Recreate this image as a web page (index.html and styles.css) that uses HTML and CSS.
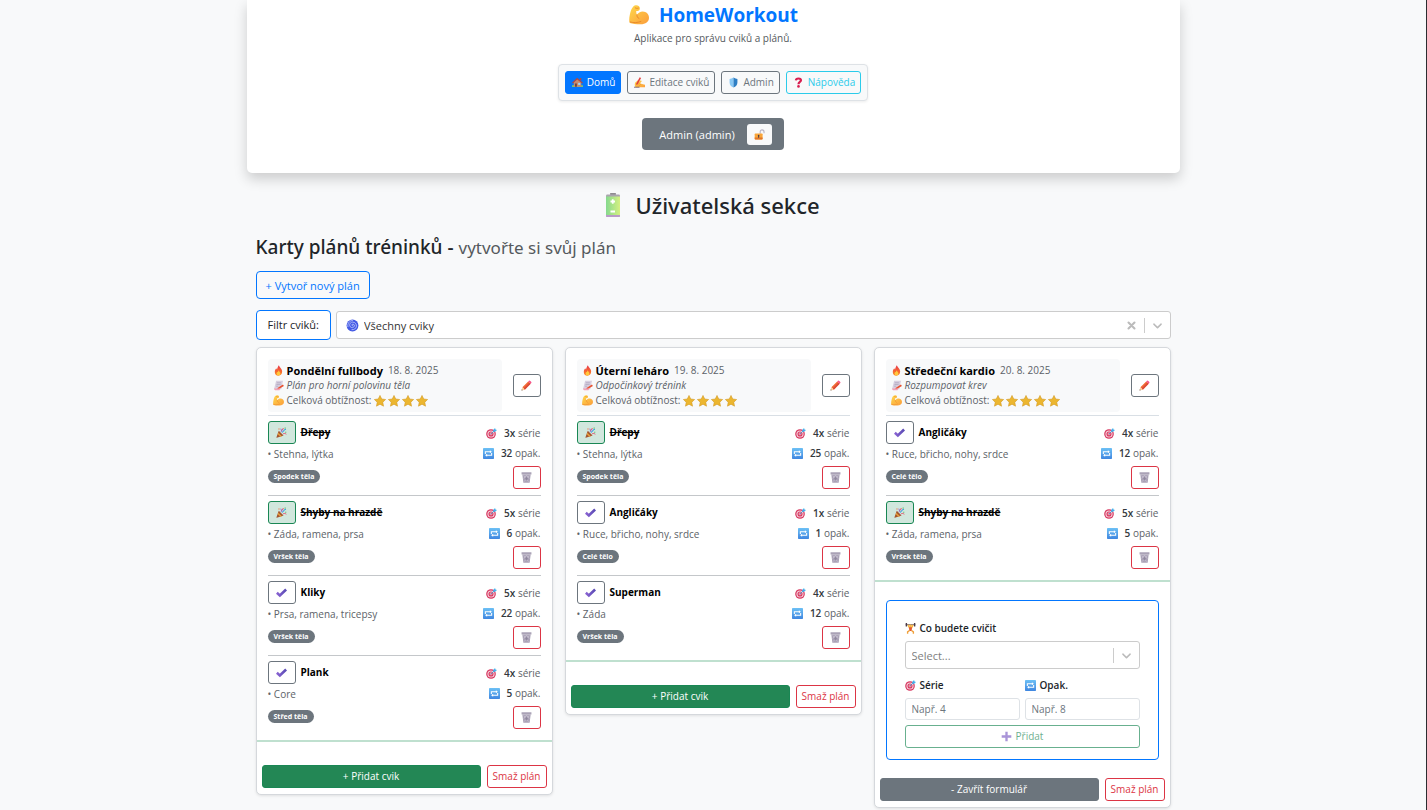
FILE: index.html
```html
<!DOCTYPE html>
<html lang="cs">
<head>
<meta charset="utf-8">
<meta name="viewport" content="width=device-width, initial-scale=1">
<title>HomeWorkout</title>
<link rel="stylesheet" href="styles.css">
</head>
<body>
<svg class="sprite" aria-hidden="true">
  <defs>
    <linearGradient id="g-skin" x1="0" y1="0" x2="1" y2="1"><stop offset="0" stop-color="#ffd84a"/><stop offset="1" stop-color="#fb9d3c"/></linearGradient>
    <linearGradient id="g-fire" x1="0" y1="0" x2="0" y2="1"><stop offset="0" stop-color="#e8364c"/><stop offset="1" stop-color="#ff8a1f"/></linearGradient>
    <linearGradient id="g-battery" x1="0" y1="0" x2="1" y2="0"><stop offset="0" stop-color="#86d98e"/><stop offset="1" stop-color="#d5f082"/></linearGradient>
    <linearGradient id="g-check" x1="0" y1="0" x2="1" y2="0"><stop offset="0" stop-color="#8a63d2"/><stop offset="1" stop-color="#5a4bb5"/></linearGradient>
    <linearGradient id="g-repeat" x1="0" y1="0" x2="0" y2="1"><stop offset="0" stop-color="#6cc0f5"/><stop offset="1" stop-color="#3f86e0"/></linearGradient>
  </defs>
  <symbol id="i-muscle" viewBox="0 0 16 16"><path fill="url(#g-skin)" d="M3.300 1.300C4.300.3 6.500-.1 7.700.8c1 .7 1.300 2.200.6 3.200-.5.700-1.500.9-2.500.8-.1 1.200.1 2.200.6 3 .9-1.600 2.600-2.600 4.600-2.600 2.800 0 5 2.200 5 5 0 3.200-2.700 5.200-6.800 5.200-3.500 0-6.500-.2-8.500-1C0 13.800 0 10.500.7 7.500c.5-2.400 1.300-4.900 2.600-6.200z"/><path fill="none" stroke="#ea8b2c" stroke-width=".8" stroke-linecap="round" d="M6.400 7.800c-.3 1.300.4 2.500 1.500 2.900M5 2.300c.8.500 1.700.5 2.500.2M1 13.600c3 .9 6 .5 8.500-.4"/></symbol>
  <symbol id="i-house" viewBox="0 0 16 16"><path fill="#7bc96f" d="M0 12h16v2.500H0z"/><path fill="#c98a6c" d="M2.500 7L8 2.500 13.500 7v7h-11z"/><path fill="#b3483f" d="M7.500 1L16 8.200l-1.200 1.300L7.500 3.700 1.200 9.500 0 8.200zM11.500 1.500h2v4l-2-1.500z"/><path fill="#6b4238" d="M4.500 9.500h2.500V14H4.500z"/><path fill="#9fdcff" d="M9 8.500h3v3H9z"/></symbol>
  <symbol id="i-write" viewBox="0 0 16 16"><path fill="url(#g-skin)" d="M1.500 8.500l4.500-4 1.500.8L6 7.800l4-3 1.300 1.300-2.500 3 2.800 1.200 4.400 1v3.700H3.500C1.500 15 .5 12.500 1.500 8.500z"/><path fill="#e3413f" d="M8.300.3l2 1.100-4.600 8.800-2.400 1.800.2-3z"/><path stroke="#e98a2b" stroke-width=".8" fill="none" d="M5 11.500l3.500-2.700M7 13l3-2.600"/><path fill="#6b5566" d="M0 14.200h8v1.200H0z"/></symbol>
  <symbol id="i-shield" viewBox="0 0 16 16"><path fill="#89c9f5" d="M8 .8C6 2.200 4 2.800 2.300 2.900v5C2.300 11.500 4.800 14 8 15.300z"/><path fill="#2e7fc4" d="M8 .8c2 1.400 4 2 5.700 2.100v5c0 3.600-2.500 6.100-5.700 7.400z"/></symbol>
  <symbol id="i-question" viewBox="0 0 16 16"><path fill="none" stroke="#d81e50" stroke-width="3.200" d="M4.200 4.900C4.300 3 5.800 2.200 8 2.200c2.300 0 3.600 1 3.600 2.700C11.600 7.300 8 7.200 8 10.400"/><circle cx="8" cy="13.700" r="1.900" fill="#d81e50"/></symbol>
  <symbol id="i-lock" viewBox="0 0 16 16"><path fill="none" stroke="#b9b4c4" stroke-width="1.600" d="M9 7V4.200C9 2.300 10.200 1.200 11.800 1.200s2.800 1.100 2.800 3V6"/><rect x="1" y="6.500" width="11.500" height="8.700" rx="1" fill="#f9a63a"/><path fill="#e0762b" d="M1 12.500h11.500v1.700q0 1-1 1H2q-1 0-1-1z"/><path fill="#4d3c48" d="M6.700 8.500a1.300 1.300 0 0 1 .8 2.300v2H6v-2a1.300 1.300 0 0 1 .7-2.300z"/></symbol>
  <symbol id="i-battery" viewBox="0 0 14 24"><rect x="4" y="0" width="6" height="2" rx=".7" fill="#8f8b91"/><rect x="0" y="1.500" width="14" height="22.500" rx="1.200" fill="#aaa5ae"/><rect x="0" y="3.500" width="14" height="18.500" fill="url(#g-battery)"/><path stroke="#fff" stroke-width="1.800" d="M4.500 8.500h4.500M6.750 6.200v4.600M4.500 18.500h4.500"/><path fill="#b99ac8" d="M0 22h14v.8q0 1.200-1.200 1.200H1.200Q0 24 0 22.800z"/></symbol>
  <symbol id="i-spiral" viewBox="0 0 16 16"><circle cx="8" cy="8" r="7.300" fill="#4359e4"/><path fill="none" stroke="#c3cefd" stroke-width="1" stroke-linecap="round" d="M8.200 8.300c-1 .2-1.500-1-.6-1.700 1.400-1 3.100.5 2.700 2.100-.6 2.200-3.700 2.600-5.100.8C3.500 7 5.100 4 8 3.800c3.200-.1 5.200 2.600 4.800 5.400-.5 2.600-2.800 4.200-5.500 4M2.300 9.500C1.500 5.500 4.500 1.800 8 1.700"/></symbol>
  <symbol id="i-fire" viewBox="0 0 16 16"><path fill="url(#g-fire)" d="M8.500.3c.4 2.300 4.800 5 4.800 9.300 0 3.600-2.300 6-5.400 6-3.300 0-5.300-2.400-5.300-5.500 0-2.400 1.200-4 2.100-5.300.4 1 .7 1.500 1.200 1.900C6.300 4.500 7 2.300 8.500.3z"/><path fill="#ffc83d" d="M8.200 7.500c.3 1.400 2.500 2.600 2.500 4.900 0 1.800-1.200 2.900-2.700 2.900s-2.800-1.100-2.800-2.800c0-1.300.7-2.100 1.200-2.800.3.4.5.600.8.7.1-1.100.4-2 1-2.900z"/></symbol>
  <symbol id="i-note" viewBox="0 0 16 16"><path fill="#d6cfe0" d="M4.500 1h10l-2.500 12.500H1.500z"/><path stroke="#9a90ab" stroke-width=".7" d="M5.500 4h6M5 6.500h6M4.500 9h3"/><path fill="#e9502f" d="M14.500 6.500l1.300 2.200-7.300 4.500-2.800.5 1.500-2.500z"/><path fill="#f3a1b4" d="M1.500 12.500h9l-1 2.500H3q-1.500-.5-1.500-2.500z"/></symbol>
  <symbol id="i-star" viewBox="0 0 16 16"><path fill="#ecb62f" stroke="#d49a25" stroke-width=".8" stroke-linejoin="round" d="M8 .6l2.300 4.700 5.200.7-3.800 3.600 1 5.300L8 12.300l-4.700 2.600 1-5.300L.5 6l5.200-.7z"/></symbol>
  <symbol id="i-pencil" viewBox="0 0 16 16"><path fill="#f26a35" d="M2 10.500L10.500 2 14 5.500 5.500 14z"/><path fill="#d94b38" d="M3.700 12.300l8.600-8.500L14 5.500 5.500 14z"/><path fill="#f6518a" d="M10.500 2l1-1q1-.7 2 .3l1.200 1.200q1 1 .3 2l-1 1z"/><path fill="#ffd29b" d="M2 10.500L5.500 14 .7 15.300z"/><path fill="#4b3b47" d="M1.200 13.500l1.300 1.300-1.800.5z"/></symbol>
  <symbol id="i-party" viewBox="0 0 16 16"><path fill="#a3552f" d="M4 5.500l7 7-9.800 3q-.8.200-.5-.6z"/><path fill="#e9a23b" d="M3.200 8.300l5.500 5.200-2.300.8-3.900-3.600z"/><path fill="none" stroke="#8b4fc0" stroke-width="1.400" d="M7.500 7c1-1.500.2-3-.5-4.500"/><path fill="none" stroke="#3f9de0" stroke-width="1.500" d="M9 8.200c.3-2 2-1.700 2.600-3.200s1.400-1 2.900-1.500"/><path fill="none" stroke="#e34a6e" stroke-width="1.400" d="M10.300 10c1.500-1 3-.8 4.700.5M9 5l1.700-3.500"/><path fill="#5ac46c" d="M12.500.8h1.700v1.600h-1.700zM13.300 7h1.700v1.400h-1.700z"/><path fill="#f36a3c" d="M3.500 2h1.700v1.700H3.500z"/></symbol>
  <symbol id="i-check" viewBox="0 0 16 16"><path fill="none" stroke="url(#g-check)" stroke-width="3.800" d="M1.200 8.500L5.600 12.400 14.700 3.600"/></symbol>
  <symbol id="i-target" viewBox="0 0 16 16"><circle cx="7.300" cy="8.700" r="7" fill="#d7365f"/><circle cx="7.300" cy="8.700" r="5.200" fill="#f7d9e1"/><circle cx="7.300" cy="8.700" r="3.700" fill="#d7365f"/><circle cx="7.300" cy="8.700" r="2" fill="#f7d9e1"/><circle cx="7.300" cy="8.700" r="1" fill="#b81f4b"/><path stroke="#4c8fc2" stroke-width="1.200" d="M7.300 8.700l5-5"/><path fill="#46b1ec" d="M10.300 5.700l.3-3L13.200 0l.6 2.200 2.200.6-2.700 2.600z"/></symbol>
  <symbol id="i-repeat" viewBox="0 0 16 16"><rect width="16" height="16" rx="1" fill="url(#g-repeat)"/><path fill="none" stroke="#fff" stroke-width="1.500" d="M3.400 8.800V5.500h7.300M12.600 7.200v3.300H5.300"/><path fill="#fff" d="M10 3.300l2.900 2.200L10 7.700zM6 8.300l-2.900 2.200L6 12.700z"/></symbol>
  <symbol id="i-trash" viewBox="0 0 16 16"><path fill="#aaa2b6" d="M.8.500h14.400V3.500H.8zM2 4h12l-1.400 11.500H3.400z"/><path fill="none" stroke="#dcd6e4" stroke-width=".7" d="M4 5l7 9M8 4.500l4 5M12 5l-7.500 9M8 4.500L4 9.500"/><ellipse cx="8" cy="9.300" rx="1.800" ry="2.200" fill="#8f879d"/></symbol>
  <symbol id="i-lifter" viewBox="0 0 16 16"><path stroke="#4a3b48" stroke-width="1.200" d="M1 2.500h14"/><path stroke="#4a3b48" stroke-width="2" d="M2 0v5M14 0v5"/><path fill="none" stroke="#f6b13c" stroke-width="1.900" d="M4.300 2.500l2 4.500h3.400l2-4.500"/><circle cx="8" cy="4.200" r="1.900" fill="#f8b73e"/><path fill="#e2562f" d="M5.800 6.300h4.400l-.5 5.200H6.300z"/><path fill="none" stroke="#f0a038" stroke-width="2" d="M6.500 11l-2.700 2v2.700M9.500 11l2.700 2v2.700"/></symbol>
  <symbol id="i-plus" viewBox="0 0 16 16"><path stroke="#7c5cc4" stroke-width="3.400" d="M8 1v14M1 8h14"/></symbol>
  <symbol id="i-chevron" viewBox="0 0 20 20"><path fill="currentColor" d="M4.500 7.500c.5-.5 1.100-.5 1.600 0L10 11.300l3.900-3.800c.5-.5 1.200-.5 1.600 0 .5.500.4 1.200 0 1.600l-4.700 4.600c-.2.200-.5.300-.8.300s-.6-.1-.8-.3L4.500 9.100c-.4-.4-.4-1.100 0-1.600z"/></symbol>
  <symbol id="i-cross" viewBox="0 0 20 20"><path stroke="currentColor" stroke-width="2.800" stroke-linecap="round" d="M6 6l8 8M14 6l-8 8"/></symbol>
</svg>

<div class="page">
  <header class="hero">
    <h1 class="brand"><svg class="brand-icon"><use href="#i-muscle"/></svg>HomeWorkout</h1>
    <p class="tagline">Aplikace pro správu cviků a plánů.</p>
    <nav class="nav">
      <a class="btn btn-primary" href="#"><svg class="ico"><use href="#i-house"/></svg>Domů</a>
      <a class="btn btn-gray" href="#"><svg class="ico"><use href="#i-write"/></svg>Editace cviků</a>
      <a class="btn btn-gray" href="#"><svg class="ico"><use href="#i-shield"/></svg>Admin</a>
      <a class="btn btn-info" href="#"><svg class="ico"><use href="#i-question"/></svg>Nápověda</a>
    </nav>
    <div class="user">
      <span>Admin (admin)</span>
      <button class="logout" type="button" aria-label="Odhlásit"><svg class="ico"><use href="#i-lock"/></svg></button>
    </div>
  </header>

  <main class="content">
    <h2 class="section-title"><svg class="battery"><use href="#i-battery"/></svg>Uživatelská sekce</h2>
    <h3 class="plans-title">Karty plánů tréninků - <small class="plans-sub">vytvořte si svůj plán</small></h3>
    <button class="create" type="button">+ Vytvoř nový plán</button>

    <div class="filter">
      <label class="filter-label" for="filter">Filtr cviků:</label>
      <div class="picker">
        <svg class="ico"><use href="#i-spiral"/></svg>
        <select class="picker-select" id="filter"><option>Všechny cviky</option></select>
        <button class="picker-clear" type="button" aria-label="Vymazat"><svg class="picker-mark"><use href="#i-cross"/></svg></button>
        <span class="picker-sep"></span>
        <svg class="picker-mark"><use href="#i-chevron"/></svg>
      </div>
    </div>

    <div class="plans">
      <article class="card">
        <header class="card-head">
          <div class="summary">
            <div class="line"><svg class="ico"><use href="#i-fire"/></svg><h4 class="plan-name">Pondělní fullbody</h4><time class="date">18. 8. 2025</time></div>
            <div class="line"><svg class="ico"><use href="#i-note"/></svg><em>Plán pro horní polovinu těla</em></div>
            <div class="line"><svg class="ico"><use href="#i-muscle"/></svg>Celková obtížnost:<span class="stars"><svg class="ico"><use href="#i-star"/></svg><svg class="ico"><use href="#i-star"/></svg><svg class="ico"><use href="#i-star"/></svg><svg class="ico"><use href="#i-star"/></svg></span></div>
          </div>
          <button class="sq" type="button" aria-label="Upravit plán"><svg class="ico"><use href="#i-pencil"/></svg></button>
        </header>
        <ul class="list">
          <li class="item">
            <div class="info"><div class="name done"><button class="sq sq-done" type="button" aria-label="Hotovo"><svg class="ico"><use href="#i-party"/></svg></button><span>Dřepy</span></div><div class="parts">• Stehna, lýtka</div><span class="badge">Spodek těla</span></div>
            <div class="stats"><div class="stat"><svg class="ico"><use href="#i-target"/></svg><span><b>3x</b> série</span></div><div class="stat"><svg class="ico"><use href="#i-repeat"/></svg><span><b>32</b> opak.</span></div><button class="sq sq-del" type="button" aria-label="Smazat"><svg class="ico"><use href="#i-trash"/></svg></button></div>
          </li>
          <li class="item">
            <div class="info"><div class="name done"><button class="sq sq-done" type="button" aria-label="Hotovo"><svg class="ico"><use href="#i-party"/></svg></button><span>Shyby na hrazdě</span></div><div class="parts">• Záda, ramena, prsa</div><span class="badge">Vršek těla</span></div>
            <div class="stats"><div class="stat"><svg class="ico"><use href="#i-target"/></svg><span><b>5x</b> série</span></div><div class="stat"><svg class="ico"><use href="#i-repeat"/></svg><span><b>6</b> opak.</span></div><button class="sq sq-del" type="button" aria-label="Smazat"><svg class="ico"><use href="#i-trash"/></svg></button></div>
          </li>
          <li class="item">
            <div class="info"><div class="name"><button class="sq" type="button" aria-label="Splnit"><svg class="ico"><use href="#i-check"/></svg></button><span>Kliky</span></div><div class="parts">• Prsa, ramena, tricepsy</div><span class="badge">Vršek těla</span></div>
            <div class="stats"><div class="stat"><svg class="ico"><use href="#i-target"/></svg><span><b>5x</b> série</span></div><div class="stat"><svg class="ico"><use href="#i-repeat"/></svg><span><b>22</b> opak.</span></div><button class="sq sq-del" type="button" aria-label="Smazat"><svg class="ico"><use href="#i-trash"/></svg></button></div>
          </li>
          <li class="item">
            <div class="info"><div class="name"><button class="sq" type="button" aria-label="Splnit"><svg class="ico"><use href="#i-check"/></svg></button><span>Plank</span></div><div class="parts">• Core</div><span class="badge">Střed těla</span></div>
            <div class="stats"><div class="stat"><svg class="ico"><use href="#i-target"/></svg><span><b>4x</b> série</span></div><div class="stat"><svg class="ico"><use href="#i-repeat"/></svg><span><b>5</b> opak.</span></div><button class="sq sq-del" type="button" aria-label="Smazat"><svg class="ico"><use href="#i-trash"/></svg></button></div>
          </li>
        </ul>
        <footer class="card-foot"><button class="btn btn-success grow" type="button">+ Přidat cvik</button><button class="btn btn-danger" type="button">Smaž plán</button></footer>
      </article>

      <article class="card">
        <header class="card-head">
          <div class="summary">
            <div class="line"><svg class="ico"><use href="#i-fire"/></svg><h4 class="plan-name">Úterní leháro</h4><time class="date">19. 8. 2025</time></div>
            <div class="line"><svg class="ico"><use href="#i-note"/></svg><em>Odpočinkový trénink</em></div>
            <div class="line"><svg class="ico"><use href="#i-muscle"/></svg>Celková obtížnost:<span class="stars"><svg class="ico"><use href="#i-star"/></svg><svg class="ico"><use href="#i-star"/></svg><svg class="ico"><use href="#i-star"/></svg><svg class="ico"><use href="#i-star"/></svg></span></div>
          </div>
          <button class="sq" type="button" aria-label="Upravit plán"><svg class="ico"><use href="#i-pencil"/></svg></button>
        </header>
        <ul class="list">
          <li class="item">
            <div class="info"><div class="name done"><button class="sq sq-done" type="button" aria-label="Hotovo"><svg class="ico"><use href="#i-party"/></svg></button><span>Dřepy</span></div><div class="parts">• Stehna, lýtka</div><span class="badge">Spodek těla</span></div>
            <div class="stats"><div class="stat"><svg class="ico"><use href="#i-target"/></svg><span><b>4x</b> série</span></div><div class="stat"><svg class="ico"><use href="#i-repeat"/></svg><span><b>25</b> opak.</span></div><button class="sq sq-del" type="button" aria-label="Smazat"><svg class="ico"><use href="#i-trash"/></svg></button></div>
          </li>
          <li class="item">
            <div class="info"><div class="name"><button class="sq" type="button" aria-label="Splnit"><svg class="ico"><use href="#i-check"/></svg></button><span>Angličáky</span></div><div class="parts">• Ruce, břicho, nohy, srdce</div><span class="badge">Celé tělo</span></div>
            <div class="stats"><div class="stat"><svg class="ico"><use href="#i-target"/></svg><span><b>1x</b> série</span></div><div class="stat"><svg class="ico"><use href="#i-repeat"/></svg><span><b>1</b> opak.</span></div><button class="sq sq-del" type="button" aria-label="Smazat"><svg class="ico"><use href="#i-trash"/></svg></button></div>
          </li>
          <li class="item">
            <div class="info"><div class="name"><button class="sq" type="button" aria-label="Splnit"><svg class="ico"><use href="#i-check"/></svg></button><span>Superman</span></div><div class="parts">• Záda</div><span class="badge">Vršek těla</span></div>
            <div class="stats"><div class="stat"><svg class="ico"><use href="#i-target"/></svg><span><b>4x</b> série</span></div><div class="stat"><svg class="ico"><use href="#i-repeat"/></svg><span><b>12</b> opak.</span></div><button class="sq sq-del" type="button" aria-label="Smazat"><svg class="ico"><use href="#i-trash"/></svg></button></div>
          </li>
        </ul>
        <footer class="card-foot"><button class="btn btn-success grow" type="button">+ Přidat cvik</button><button class="btn btn-danger" type="button">Smaž plán</button></footer>
      </article>

      <article class="card">
        <header class="card-head">
          <div class="summary">
            <div class="line"><svg class="ico"><use href="#i-fire"/></svg><h4 class="plan-name">Středeční kardio</h4><time class="date">20. 8. 2025</time></div>
            <div class="line"><svg class="ico"><use href="#i-note"/></svg><em>Rozpumpovat krev</em></div>
            <div class="line"><svg class="ico"><use href="#i-muscle"/></svg>Celková obtížnost:<span class="stars"><svg class="ico"><use href="#i-star"/></svg><svg class="ico"><use href="#i-star"/></svg><svg class="ico"><use href="#i-star"/></svg><svg class="ico"><use href="#i-star"/></svg><svg class="ico"><use href="#i-star"/></svg></span></div>
          </div>
          <button class="sq" type="button" aria-label="Upravit plán"><svg class="ico"><use href="#i-pencil"/></svg></button>
        </header>
        <ul class="list">
          <li class="item">
            <div class="info"><div class="name"><button class="sq" type="button" aria-label="Splnit"><svg class="ico"><use href="#i-check"/></svg></button><span>Angličáky</span></div><div class="parts">• Ruce, břicho, nohy, srdce</div><span class="badge">Celé tělo</span></div>
            <div class="stats"><div class="stat"><svg class="ico"><use href="#i-target"/></svg><span><b>4x</b> série</span></div><div class="stat"><svg class="ico"><use href="#i-repeat"/></svg><span><b>12</b> opak.</span></div><button class="sq sq-del" type="button" aria-label="Smazat"><svg class="ico"><use href="#i-trash"/></svg></button></div>
          </li>
          <li class="item">
            <div class="info"><div class="name done"><button class="sq sq-done" type="button" aria-label="Hotovo"><svg class="ico"><use href="#i-party"/></svg></button><span>Shyby na hrazdě</span></div><div class="parts">• Záda, ramena, prsa</div><span class="badge">Vršek těla</span></div>
            <div class="stats"><div class="stat"><svg class="ico"><use href="#i-target"/></svg><span><b>5x</b> série</span></div><div class="stat"><svg class="ico"><use href="#i-repeat"/></svg><span><b>5</b> opak.</span></div><button class="sq sq-del" type="button" aria-label="Smazat"><svg class="ico"><use href="#i-trash"/></svg></button></div>
          </li>
        </ul>
        <form class="add-form">
          <label class="field-label" for="exercise"><svg class="ico"><use href="#i-lifter"/></svg>Co budete cvičit</label>
          <div class="picker">
            <select class="picker-select picker-empty" id="exercise"><option>Select...</option></select>
            <span class="picker-sep"></span>
            <svg class="picker-mark"><use href="#i-chevron"/></svg>
          </div>
          <div class="pair">
            <div class="field"><label class="field-label" for="sets"><svg class="ico"><use href="#i-target"/></svg>Série</label><input class="input" id="sets" type="text" placeholder="Např. 4"></div>
            <div class="field"><label class="field-label" for="reps"><svg class="ico"><use href="#i-repeat"/></svg>Opak.</label><input class="input" id="reps" type="text" placeholder="Např. 8"></div>
          </div>
          <button class="btn btn-add" type="button" disabled><svg class="ico"><use href="#i-plus"/></svg>Přidat</button>
        </form>
        <footer class="card-foot"><button class="btn btn-secondary grow" type="button">- Zavřít formulář</button><button class="btn btn-danger" type="button">Smaž plán</button></footer>
      </article>
    </div>
  </main>
</div>
</body>
</html>
```
FILE: styles.css
```css
* { box-sizing: border-box; }

body {
  min-height: 100vh;
  margin: 0;
  background: #f8f9fa;
  border-right: 1px solid #2b2d30;
  color: #212529;
  font-family: "Segoe UI", "Open Sans", "Noto Sans", sans-serif;
  font-size: 10px;
  line-height: 15px;
}

h1, h2, h3, h4, p, ul { margin: 0; padding: 0; }
button, input, select { font: inherit; color: inherit; margin: 0; }
button { cursor: pointer; }
.sprite { position: absolute; width: 0; height: 0; }
.ico { width: 11px; height: 11px; flex: none; }

.page { max-width: 933px; margin: 0 auto; }

.hero {
  display: flex;
  flex-direction: column;
  align-items: center;
  padding-bottom: 23px;
  background: #fff;
  border-radius: 0 0 5px 5px;
  box-shadow: 0 6px 13px rgba(0, 0, 0, .18);
}
.brand {
  display: flex;
  align-items: center;
  gap: 9px;
  color: #0276ff;
  font-size: 19px;
  font-weight: 700;
  line-height: 30px;
}
.brand-icon { width: 22px; height: 20px; }
.tagline { margin: 1px 0 18px; color: #55595d; }

.nav {
  display: flex;
  gap: 6px;
  padding: 6px;
  background: #f8f9fa;
  border: 1px solid #dee2e6;
  border-radius: 4px;
  box-shadow: 0 1px 3px rgba(0, 0, 0, .08);
}
.btn {
  display: inline-flex;
  align-items: center;
  justify-content: center;
  gap: 4px;
  height: 23px;
  padding: 0 6px;
  background: #fff;
  border: 1px solid;
  border-radius: 3px;
  text-decoration: none;
  white-space: nowrap;
}
.nav .btn { padding: 0 5px 0 6px; background: none; }
.nav .btn-primary { background: #0276ff; border-color: #0276ff; color: #fff; }
.btn-gray { border-color: #6c757d; color: #6c757d; }
.btn-info { border-color: #2bcbea; color: #2bcbea; }
.btn-success { background: #238755; border-color: #198754; color: #fff; }
.btn-secondary { background: #6c757d; border-color: #6c757d; color: #fff; }
.btn-danger { padding: 0 5px; border-color: #dc3545; color: #dc3545; }
.grow { flex: 1; }

.user {
  display: flex;
  align-items: center;
  gap: 12px;
  height: 32px;
  margin-top: 17px;
  padding: 0 12px 0 17px;
  background: #6c757d;
  border-radius: 4px;
  color: #fff;
  font-size: 11px;
}
.logout {
  display: grid;
  place-items: center;
  width: 25px;
  height: 21px;
  padding: 0;
  background: #f8f9fa;
  border: 0;
  border-radius: 3px;
}

.content { padding: 15px 9px 2px; }
.section-title,
.plans-title { font-family: "Segoe UI", "Noto Sans", "Open Sans", sans-serif; font-weight: 500; }
.section-title {
  display: flex;
  align-items: center;
  justify-content: center;
  gap: 15px;
  font-size: 22px;
  line-height: 34px;
}
.battery { width: 14px; height: 24px; }
.plans-title { margin-top: 11px; font-size: 19px; line-height: 28px; }
.plans-sub { color: #55595d; font-size: 17px; font-weight: 400; }
.create {
  display: block;
  height: 28px;
  margin-top: 9px;
  padding: 0 9px;
  background: none;
  border: 1px solid #0276ff;
  border-radius: 4px;
  color: #0276ff;
  font-size: 11px;
}

.filter { display: flex; align-items: center; gap: 5px; margin-top: 11px; }
.filter-label {
  height: 30px;
  padding: 0 11px;
  background: #fff;
  border: 1px solid #0276ff;
  border-radius: 4px;
  font-size: 11px;
  line-height: 28px;
}
.picker {
  display: flex;
  flex: 1;
  align-items: center;
  height: 28px;
  padding: 0 5px 0 9px;
  background: #fff;
  border: 1px solid #ccc;
  border-radius: 3px;
  font-size: 11px;
}
.picker .ico { width: 13px; height: 13px; margin-right: 5px; }
.picker-select {
  flex: 1;
  min-width: 0;
  padding: 0;
  appearance: none;
  background: none;
  border: 0;
  color: #333;
}
.picker-empty { color: #808080; }
.picker-sep { width: 1px; height: 15px; margin: 0 5px; background: #ccc; }
.picker-mark { display: block; width: 15px; height: 15px; color: #bbb; }
.picker-clear { padding: 0; background: none; border: 0; }

.plans {
  display: grid;
  grid-template-columns: repeat(3, minmax(0, 1fr));
  align-items: start;
  gap: 12px;
  margin-top: 7px;
}
.card {
  background: #fff;
  border: 1px solid #d5d8dc;
  border-radius: 5px;
  box-shadow: 0 1px 3px rgba(0, 0, 0, .1);
}
.card-head {
  display: flex;
  align-items: center;
  gap: 11px;
  margin: 11px 11px 0;
  padding-bottom: 3px;
  border-bottom: 1px solid #d9dfe5;
}
.summary { flex: 1; padding: 4px 5px; background: #f8f9fa; border-radius: 4px; }
.line { display: flex; align-items: center; gap: 3px; color: #5c6268; white-space: nowrap; }
.plan-name { color: #000; font-size: 11px; font-weight: 700; line-height: 15px; }
.date { margin-left: 2px; }
.stars { display: flex; gap: 2px; }
.stars .ico { width: 12px; height: 12px; }

.sq {
  display: grid;
  flex: none;
  place-items: center;
  width: 28px;
  height: 23px;
  padding: 0;
  background: #fff;
  border: 1px solid #6c757d;
  border-radius: 3px;
}
.sq-done { background: #d1e7dd; border-color: #198754; }
.sq-del { border-color: #dc3545; }

.list { border-bottom: 2px solid #bfe0cf; list-style: none; }
.item {
  display: flex;
  justify-content: space-between;
  height: 80px;
  margin: 0 11px;
  padding-top: 5px;
  border-bottom: 1px solid #c4c7ca;
}
.item:last-child { height: 84px; border-bottom: 0; }
.name { display: flex; align-items: center; gap: 5px; color: #000; font-weight: 700; }
.done span { text-decoration: line-through; }
.parts { margin-top: 3px; color: #5c6268; }
.badge {
  display: inline-block;
  margin-top: 8px;
  padding: 0 6px;
  background: #6c757d;
  border-radius: 7px;
  color: #fff;
  font-size: 7px;
  font-weight: 700;
  line-height: 13px;
  vertical-align: top;
}
.stats { display: flex; flex-direction: column; align-items: flex-end; gap: 6px; padding-top: 5px; color: #5c6268; }
.stat { display: flex; align-items: center; gap: 7px; line-height: 14px; }
.stat b { color: #33383d; font-weight: 600; }

.card-foot { display: flex; gap: 6px; padding: 23px 5px 6px; }

.add-form {
  display: flex;
  flex-direction: column;
  margin: 18px 11px 0;
  padding: 20px 18px 11px;
  border: 1px solid #0276ff;
  border-radius: 4px;
}
.add-form + .card-foot { padding-top: 18px; }
.add-form .picker { flex: none; padding-left: 6px; }
.field-label { display: flex; align-items: center; gap: 4px; margin-bottom: 5px; font-weight: 600; }
.pair { display: grid; grid-template-columns: 1fr 1fr; gap: 5px; margin: 9px 0 5px; }
.input {
  display: block;
  width: 100%;
  height: 22px;
  padding: 0 6px;
  background: #fff;
  border: 1px solid #dee2e6;
  border-radius: 3px;
}
.input::placeholder { color: #6c757d; opacity: 1; }
.btn-add { border-color: #198754; color: #198754; opacity: .65; }
```
